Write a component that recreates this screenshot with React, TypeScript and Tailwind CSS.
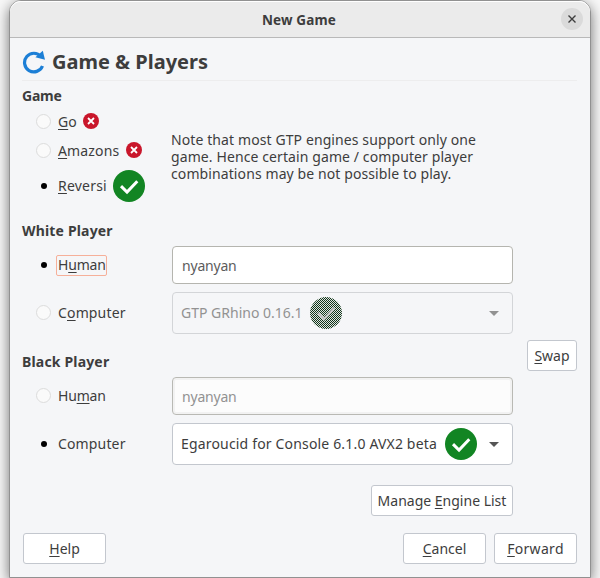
import type { ReactNode } from "react";

function Check({ dim = false }: { dim?: boolean }) {
  if (dim) {
    return (
      <span className="block size-8 shrink-0 rounded-full bg-[conic-gradient(#12351a_25%,#dfe5e1_0_50%,#12351a_0_75%,#dfe5e1_0)] bg-size-[2px_2px]">
        <svg className="block size-8" viewBox="0 0 32 32">
          <path d="M8 16.2l6 5.8L24.3 11.2" fill="none" stroke="#c3c3c3" strokeWidth="2.4" />
        </svg>
      </span>
    );
  }
  return (
    <svg className="block size-8 shrink-0" viewBox="0 0 32 32">
      <circle cx="16" cy="16" r="16" fill="#128523" />
      <path d="M8 16.2l6 5.8L24.3 11.2" fill="none" stroke="#fff" strokeWidth="3" />
    </svg>
  );
}

function Cross() {
  return (
    <svg className="block size-4 shrink-0" viewBox="0 0 16 16">
      <circle cx="8" cy="8" r="8" fill="#c9162b" />
      <path d="M5 5l6 6M11 5l-6 6" stroke="#fff" strokeWidth="1.8" />
    </svg>
  );
}

function Radio({ on = false }: { on?: boolean }) {
  return on ? (
    <span className="flex size-[15px] shrink-0 items-center justify-center">
      <span className="ml-px size-1.5 rounded-full bg-black" />
    </span>
  ) : (
    <span className="size-[15px] shrink-0 rounded-full border border-[#dcdcdc] bg-[#fafafa]" />
  );
}

function Key({ children }: { children: ReactNode }) {
  return <span className="underline decoration-1 underline-offset-2">{children}</span>;
}

function Heading({ children, className }: { children: ReactNode; className: string }) {
  return <h2 className={`h-5 font-bold leading-5 ${className}`}>{children}</h2>;
}

function Button({ children, className }: { children: ReactNode; className: string }) {
  return (
    <button className={`flex h-[31px] shrink-0 items-center justify-center rounded-[3px] border border-[#c3c7ce] bg-white whitespace-nowrap ${className}`}>
      {children}
    </button>
  );
}

function Arrow({ className }: { className: string }) {
  return (
    <svg className={`ml-auto mr-[13px] block h-[5px] w-2.5 ${className}`} viewBox="0 0 10 5">
      <path d="M0 0h10L5 5z" fill="currentColor" />
    </svg>
  );
}

export default function App() {
  return (
    <div className="h-[578px] w-[600px] overflow-hidden bg-[#f8f8f8] px-[9px] font-['Noto_Sans',sans-serif] text-[14px] text-[#3d3d3d]">
      <div className="flex h-[578px] flex-col rounded-t-[12px] border border-[#919191] bg-[#f5f6f8] shadow-[0_4px_14px_rgba(0,0,0,0.55)]">
        <header className="flex h-[37px] shrink-0 items-center rounded-t-[11px] border-b border-[#b9b9b9] bg-[#ebebeb] pr-[7px] pl-[27px] shadow-[inset_0_1px_0_#fff]">
          <h1 className="grow pt-0.5 text-center text-[13.5px] font-bold tracking-[0.16px]">New Game</h1>
          <button className="flex size-[22px] items-center justify-center rounded-full bg-[#dadada]">
            <svg className="size-2" viewBox="0 0 8 8">
              <path d="M.5 .5l7 7M7.5 .5l-7 7" stroke="#3d3d3d" strokeWidth="1.4" />
            </svg>
          </button>
        </header>
        <main className="flex grow flex-col px-3 pr-[13px]">
          <div className="flex h-[43px] shrink-0 items-center border-b border-[#ededee] pt-1.5">
            <svg className="size-6" viewBox="0 0 24 24">
              <path d="M19 6A9.3 9.3 0 1 0 20.5 15.4" transform="translate(0 .6)" fill="none" stroke="#1c7fd6" strokeWidth="3.2" />
              <path d="M13.4 7.2L20.8 .8L23 9.8z" fill="#1c7fd6" />
            </svg>
            <span className="ml-1.5 text-[20px] font-bold">Game &amp; Players</span>
          </div>
          <div className="flex">
            <div className="w-[491px] shrink-0">
              <Heading className="mt-[5px] tracking-[-0.2px]">Game</Heading>
              <div className="mt-1.5 flex h-[90px]">
                <div className="flex w-[149px] shrink-0 flex-col pl-3.5">
                  <div className="flex h-[18px] items-center">
                    <Radio />
                    <span className="ml-[7px] w-[25px]"><Key>G</Key>o</span>
                    <Cross />
                  </div>
                  <div className="mt-[11px] flex h-[18px] items-center">
                    <Radio />
                    <span className="ml-[7px] w-[68px] tracking-[0.16px]"><Key>A</Key>mazons</span>
                    <Cross />
                  </div>
                  <div className="mt-[11px] flex h-8 items-center">
                    <Radio on />
                    <span className="ml-[7px] w-[55px] pb-0.5 tracking-[0.2px]"><Key>R</Key>eversi</span>
                    <Check />
                  </div>
                </div>
                <p className="pt-[19px] leading-[17px] tracking-[0.1px] whitespace-nowrap">
                  Note that most GTP engines support only one<br />
                  game. Hence certain game / computer player<br />
                  combinations may be not possible to play.
                </p>
              </div>
              <Heading className="mt-[19px] tracking-[0.17px]">White Player</Heading>
              <div className="mt-[5px] flex h-[38px] items-center pl-3.5">
                <Radio on />
                <span className="ml-[5px] flex h-[21px] w-[51px] items-center rounded-[2px] border border-[#f6b09a] pb-px pl-px tracking-[-0.2px]"><span>H<Key>u</Key>man</span></span>
                <div className="ml-auto flex h-[38px] w-[341px] items-center rounded-[4px] border border-[#b5b5af] bg-white pl-[9px] text-[#5c5c5c]">
                  <span className="tracking-[-0.2px]">nyanyan</span>
                </div>
              </div>
              <div className="mt-2 flex h-[42px] items-center pl-3.5">
                <span className="flex pb-px"><Radio /></span>
                <span className="ml-[7px] pb-0.5 tracking-[0.15px]">C<Key>o</Key>mputer</span>
                <div className="ml-auto flex h-[42px] w-[341px] items-center rounded-[4px] border border-[#d3d5d8] bg-[#f5f6f8] pl-2 text-[#929292]">
                  <span className="w-[129px] pb-px whitespace-nowrap">GTP GRhino 0.16.1</span>
                  <Check dim />
                  <Arrow className="text-[#929292]" />
                </div>
              </div>
              <Heading className="mt-[18px] tracking-[0.17px]">Black Player</Heading>
              <div className="mt-[5px] flex h-[38px] items-center pl-3.5">
                <span className="flex pb-0.5"><Radio /></span>
                <span className="ml-[7px] pb-0.5 tracking-[-0.2px]">Hu<Key>m</Key>an</span>
                <div className="ml-auto flex h-[38px] w-[341px] items-center rounded-[4px] border border-[#b9b9b4] bg-[#fcfcfc] pl-[9px] text-[#929292] shadow-[inset_0_0_0_2px_#f2f2f2]">
                  <span className="tracking-[-0.2px]">nyanyan</span>
                </div>
              </div>
              <div className="mt-2 flex h-[42px] items-center pl-3.5">
                <Radio on />
                <span className="ml-[7px] pb-0.5 tracking-[0.15px]">Computer</span>
                <div className="ml-auto flex h-[42px] w-[341px] items-center rounded-[4px] border border-[#c3c7ce] bg-white pl-2">
                  <span className="w-[264px] pb-px tracking-[0.17px] whitespace-nowrap">Egaroucid for Console 6.1.0 AVX2 beta</span>
                  <Check />
                  <Arrow className="text-[#555]" />
                </div>
              </div>
              <Button className="mt-5 ml-auto w-[142px]"><span>Manage <Key>E</Key>ngine List</span></Button>
            </div>
            <Button className="mt-[259px] ml-3.5 w-[50px]"><span><Key>S</Key>wap</span></Button>
          </div>
          <footer className="mt-[17px] flex gap-2 pl-px">
            <Button className="mr-auto w-[83px]"><span><Key>H</Key>elp</span></Button>
            <Button className="w-[83px]"><span><Key>C</Key>ancel</span></Button>
            <Button className="w-[83px] tracking-[0.3px]"><span><Key>F</Key>orward</span></Button>
          </footer>
        </main>
      </div>
    </div>
  );
}
